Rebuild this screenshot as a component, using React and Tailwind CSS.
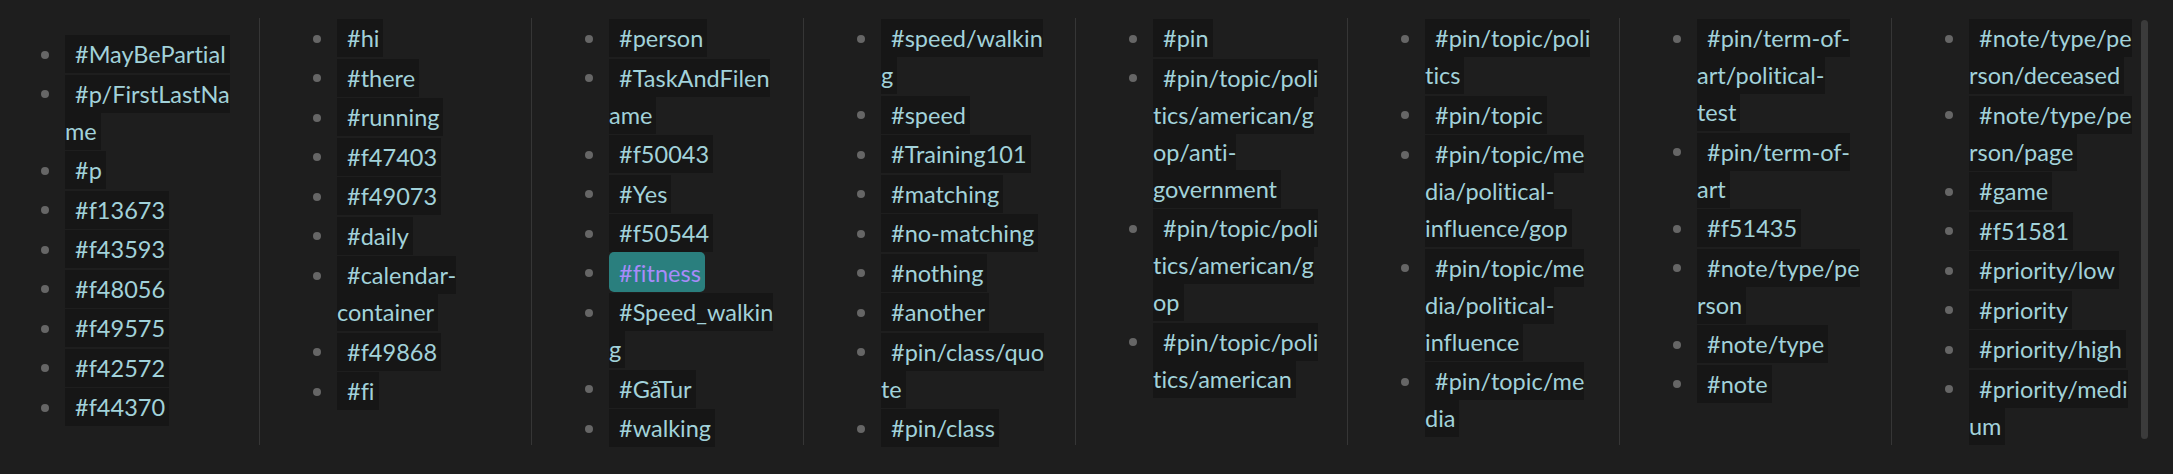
const columns = [
  [
    ["#MayBePartial"],
    ["#p/FirstLastNa", "me"],
    ["#p"],
    ["#f13673"],
    ["#f43593"],
    ["#f48056"],
    ["#f49575"],
    ["#f42572"],
    ["#f44370"],
  ],
  [
    ["#hi"],
    ["#there"],
    ["#running"],
    ["#f47403"],
    ["#f49073"],
    ["#daily"],
    ["#calendar-", "container"],
    ["#f49868"],
    ["#fi"],
  ],
  [
    ["#person"],
    ["#TaskAndFilen", "ame"],
    ["#f50043"],
    ["#Yes"],
    ["#f50544"],
    ["#fitness"],
    ["#Speed_walkin", "g"],
    ["#GåTur"],
    ["#walking"],
  ],
  [
    ["#speed/walkin", "g"],
    ["#speed"],
    ["#Training101"],
    ["#matching"],
    ["#no-matching"],
    ["#nothing"],
    ["#another"],
    ["#pin/class/quo", "te"],
    ["#pin/class"],
  ],
  [
    ["#pin"],
    ["#pin/topic/poli", "tics/american/g", "op/anti-", "government"],
    ["#pin/topic/poli", "tics/american/g", "op"],
    ["#pin/topic/poli", "tics/american"],
  ],
  [
    ["#pin/topic/poli", "tics"],
    ["#pin/topic"],
    ["#pin/topic/me", "dia/political-", "influence/gop"],
    ["#pin/topic/me", "dia/political-", "influence"],
    ["#pin/topic/me", "dia"],
  ],
  [
    ["#pin/term-of-", "art/political-", "test"],
    ["#pin/term-of-", "art"],
    ["#f51435"],
    ["#note/type/pe", "rson"],
    ["#note/type"],
    ["#note"],
  ],
  [
    ["#note/type/pe", "rson/deceased"],
    ["#note/type/pe", "rson/page"],
    ["#game"],
    ["#f51581"],
    ["#priority/low"],
    ["#priority"],
    ["#priority/high"],
    ["#priority/medi", "um"],
  ],
];

// the highlighted tag in the third column
const ACTIVE = "#fitness";

function Tag({ lines }) {
  const active = lines[0] === ACTIVE;
  return (
    <span
      className={
        active
          ? "bg-[#2a7f7e] text-[#a88bfa] rounded-[5px] pl-[10px] pr-[4px] pt-[7px] pb-[5px]"
          : "bg-[#161616] pl-[10px] pr-[4px] py-[5px]"
      }
    >
      {lines.map((line, i) => (
        <span key={i}>
          {i > 0 && <br />}
          {line}
        </span>
      ))}
    </span>
  );
}

function TagList({ items }) {
  return (
    <ul>
      {items.map((lines, i) => (
        <li key={i} className="flex mb-[2.5px]">
          <div className="w-[24px] h-[37px] flex-none flex items-center">
            <span className="w-[8px] h-[8px] rounded-full bg-[#666666]"></span>
          </div>
          <div className="leading-[37px] min-w-0">
            <Tag lines={lines} />
          </div>
        </li>
      ))}
    </ul>
  );
}

export default function App() {
  return (
    <div
      className="relative h-[474px] bg-[#1e1e1e] text-[#a2d2da] text-[23.5px] overflow-hidden [font-variant-ligatures:none]"
      style={{ fontFamily: "Lato, 'Open Sans', sans-serif" }}
    >
      <div className="flex pt-[18px]">
        {columns.map((items, i) => (
          <div
            key={i}
            className={
              i === 0
                ? "w-[259px] flex-none h-[427px] pl-[41px] pt-[18px]"
                : "w-[272px] flex-none h-[427px] border-l border-[#363636] pl-[53px] pt-[2px]"
            }
          >
            <TagList items={items} />
          </div>
        ))}
      </div>
      {/* scrollbar thumb */}
      <div className="absolute top-[20px] right-[25px] w-[7px] h-[419px] rounded-full bg-[#3b3b3b]"></div>
    </div>
  );
}
